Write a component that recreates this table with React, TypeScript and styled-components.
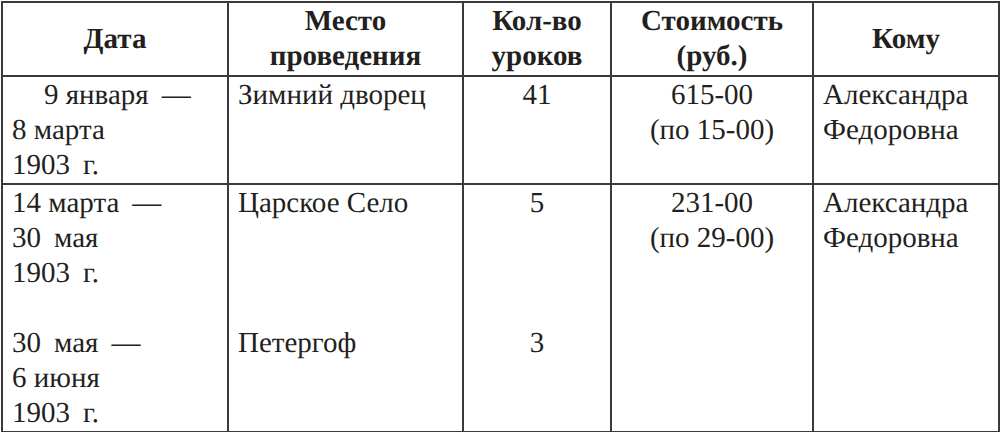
import React from "react";
import styled, { createGlobalStyle } from "styled-components";

const Global = createGlobalStyle`
  html, body { margin: 0; padding: 0; background: #ffffff; }
  body { font-family: "Liberation Serif", serif; color: #231f20; }
`;

const Page = styled.div`
  padding: 1px 0 0 1px;
  width: 1000px;
  box-sizing: border-box;
`;

const Table = styled.table`
  border-collapse: collapse;
  table-layout: fixed;
  width: 997px;
  font-family: "Liberation Serif", serif;
  text-rendering: geometricPrecision;
  color: #231f20;
  font-size: 29px;
  line-height: 35px;
`;

const Col = styled.col<{ $w: number }>`
  width: ${(p) => p.$w}px;
`;

const HeadCell = styled.th`
  border: 2px solid #3a3a3a;
  font-family: "Liberation Serif", serif;
  font-weight: bold;
  text-align: center;
  vertical-align: middle;
  padding: 1px 4px 1px;
  height: 70px;
`;

const Cell = styled.td<{ $align?: "left" | "center" }>`
  border: 2px solid #3a3a3a;
  font-family: "Liberation Serif", serif;
  vertical-align: top;
  text-align: ${(p) => p.$align ?? "left"};
  padding: 1px 6px 0 ${(p) => (p.$align === "center" ? "6px" : "9px")};
`;

const Line = styled.div<{ $indent?: boolean }>`
  white-space: pre;
  height: 35px;
  padding-left: ${(p) => (p.$indent ? "32px" : "0")};
`;

const Lines = ({ items, indentFirst }: { items: string[]; indentFirst?: boolean }) => (
  <>
    {items.map((t, i) => (
      <Line key={i} $indent={indentFirst && i === 0}>
        {t === "" ? "\u00a0" : t}
      </Line>
    ))}
  </>
);

const W = " \u2009";

export default function App() {
  return (
    <Page>
      <Global />
      <Table>
        <colgroup>
          <Col $w={226} />
          <Col $w={235} />
          <Col $w={148} />
          <Col $w={202} />
          <Col $w={186} />
        </colgroup>
        <thead>
          <tr>
            <HeadCell>Дата</HeadCell>
            <HeadCell>
              Место
              <br />
              проведения
            </HeadCell>
            <HeadCell>
              Кол-во
              <br />
              уроков
            </HeadCell>
            <HeadCell>
              Стоимость
              <br />
              (руб.)
            </HeadCell>
            <HeadCell>Кому</HeadCell>
          </tr>
        </thead>
        <tbody>
          <tr>
            <Cell>
              <Lines indentFirst items={[`9 января${W}—`, "8 марта", `1903${W}г.`]} />
            </Cell>
            <Cell>
              <Lines items={["Зимний дворец"]} />
            </Cell>
            <Cell $align="center">
              <Lines items={["41"]} />
            </Cell>
            <Cell $align="center">
              <Lines items={["615-00", "(по 15-00)"]} />
            </Cell>
            <Cell>
              <Lines items={["Александра", "Федоровна"]} />
            </Cell>
          </tr>
          <tr>
            <Cell>
              <Lines
                items={[
                  `14 марта${W}—`,
                  `30${W}мая`,
                  `1903${W}г.`,
                  "",
                  `30${W}мая${W}—`,
                  "6 июня",
                  `1903${W}г.`,
                ]}
              />
            </Cell>
            <Cell>
              <Lines items={["Царское Село", "", "", "", "Петергоф"]} />
            </Cell>
            <Cell $align="center">
              <Lines items={["5", "", "", "", "3"]} />
            </Cell>
            <Cell $align="center">
              <Lines items={["231-00", "(по 29-00)"]} />
            </Cell>
            <Cell>
              <Lines items={["Александра", "Федоровна"]} />
            </Cell>
          </tr>
        </tbody>
      </Table>
    </Page>
  );
}
